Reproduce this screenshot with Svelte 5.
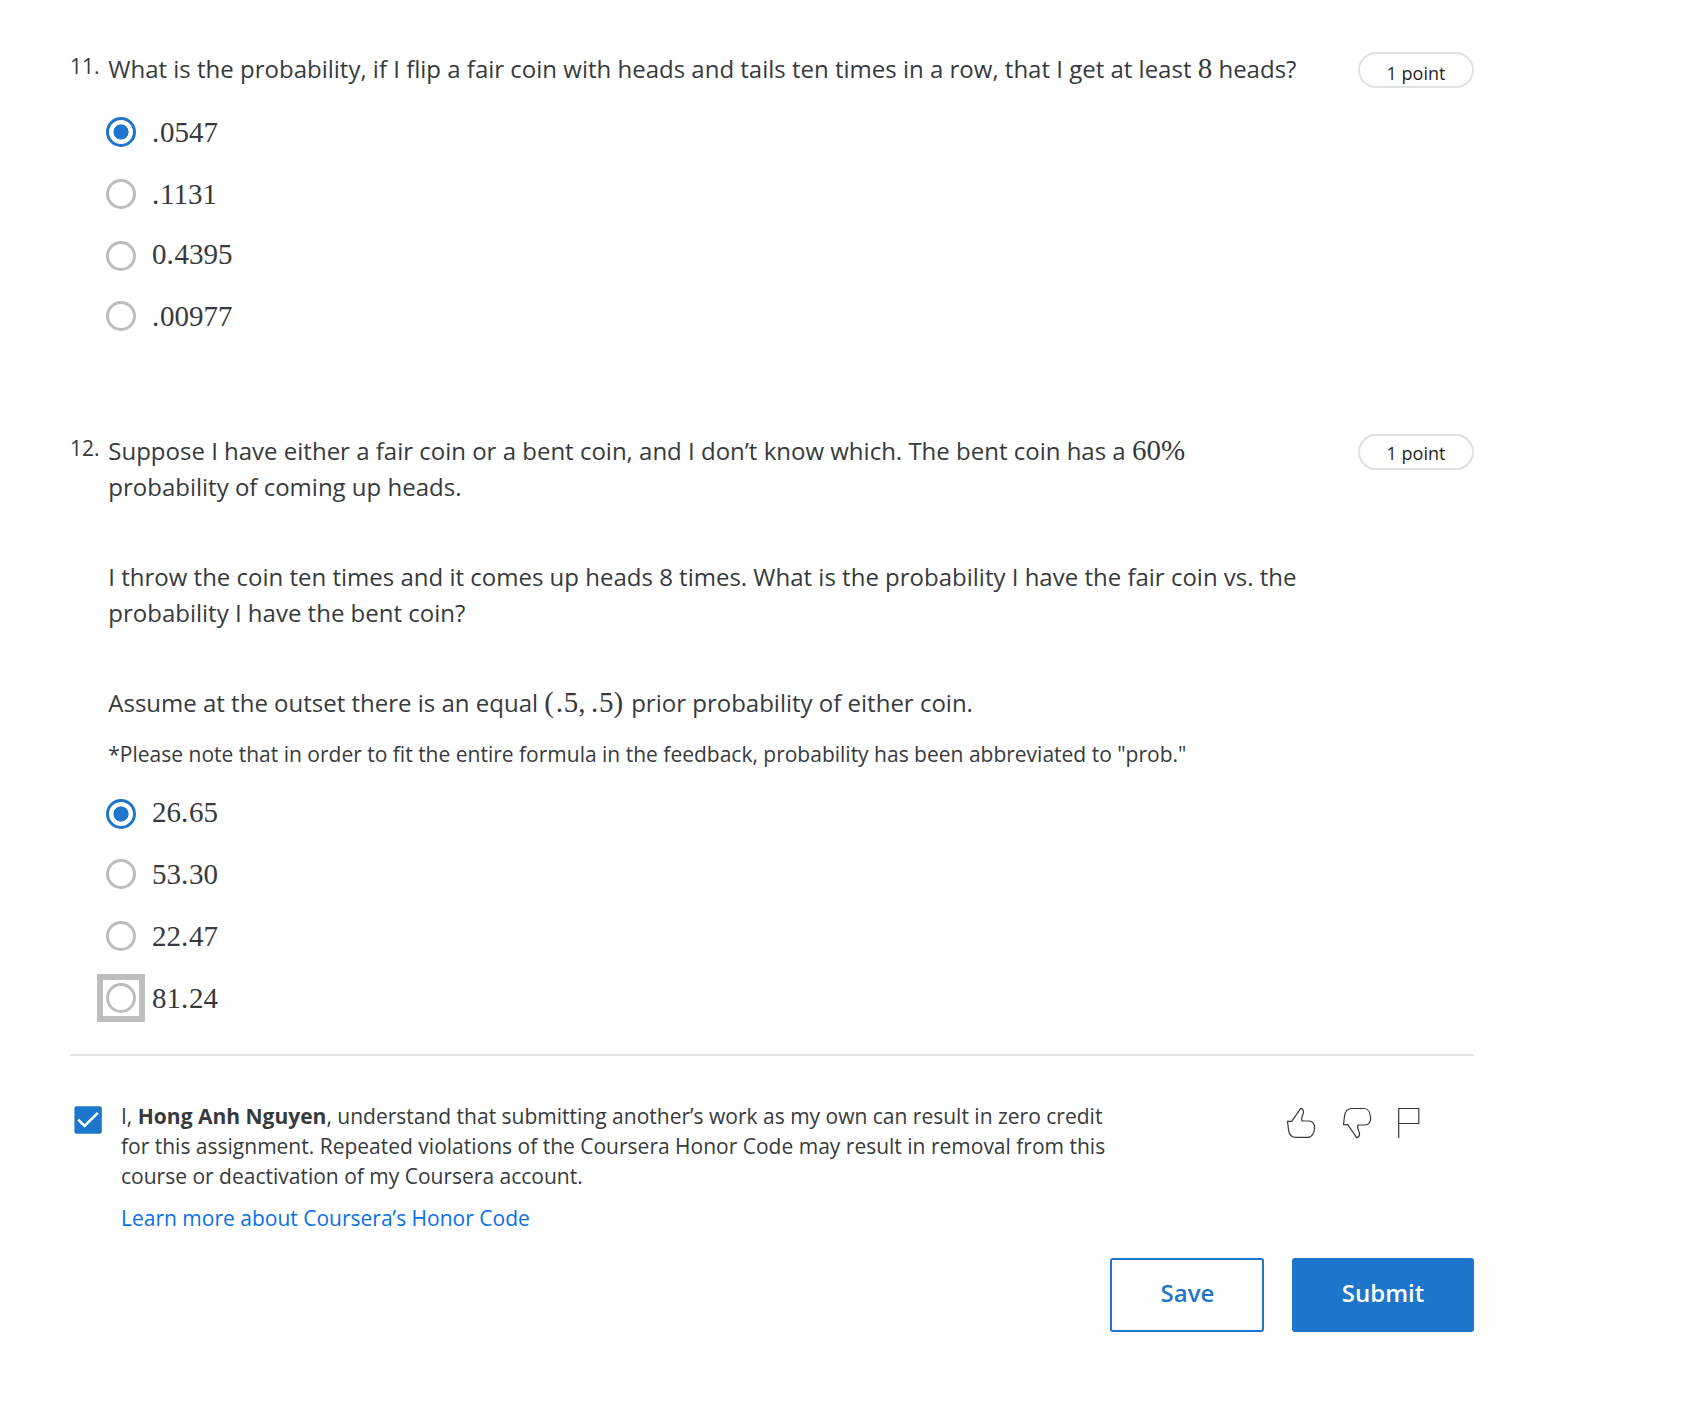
<script>
  let q1 = $state(0);
  let q2 = $state(0);
  let agreed = $state(true);

  const first = ['.0547', '.1131', '0.4395', '.00977'];
  const second = ['26.65', '53.30', '22.47', '81.24'];
</script>

{#snippet math(value)}<span class="math">{#each value.split('') as ch}{#if ch === '.'}<span class="dot">.</span>{:else}{ch}{/if}{/each}</span>{/snippet}

<main class="quiz">
  <section class="question one">
    <div class="number">11.</div>
    <div class="content">
      <p class="prompt">What is the probability, if I flip a fair coin with heads and tails ten times in a row, that I get at least {@render math('8')} heads?</p>
      <div class="options" role="radiogroup">
        {#each first as value, i}
          <label class="option">
            <input type="radio" name="q1" value={i} bind:group={q1} />
            <span class="ring"></span>
            <span class="answer">{@render math(value)}</span>
          </label>
        {/each}
      </div>
    </div>
    <div class="points">1 point</div>
  </section>

  <section class="question two">
    <div class="number">12.</div>
    <div class="content">
      <p class="prompt">Suppose I have either a fair coin or a bent coin, and I don’t know which. The bent coin has a <span class="math">60%</span><br />probability of coming up heads.</p>
      <p class="prompt">I throw the coin ten times and it comes up heads 8 times. What is the probability I have the fair coin vs. the<br />probability I have the bent coin?</p>
      <p class="prompt">Assume at the outset there is an equal <span class="math"><span class="paren">(</span><span class="dot">.</span>5<span class="comma">,</span><span class="dot">.</span>5<span class="paren">)</span></span> prior probability of either coin.</p>
      <p class="note">*Please note that in order to fit the entire formula in the feedback, probability has been abbreviated to "prob."</p>
      <div class="options" role="radiogroup">
        {#each second as value, i}
          <label class="option" class:focused={i === 3}>
            <input type="radio" name="q2" value={i} bind:group={q2} />
            <span class="ring"></span>
            <span class="answer">{@render math(value)}</span>
          </label>
        {/each}
      </div>
    </div>
    <div class="points">1 point</div>
  </section>

  <footer>
    <div class="honor">
      <label class="check">
        <input type="checkbox" bind:checked={agreed} />
        <svg width="28" height="28" viewBox="0 0 28 28">
          <rect x="0.4" y="0.3" width="27.4" height="27.4" rx="2" fill="#1d76cb" />
          {#if agreed}<path d="M4.2 13.6 L10.6 20 L23.8 6.8" fill="none" stroke="#fff" stroke-width="2.5" />{/if}
        </svg>
      </label>
      <div class="statement">
        <p>I, <b>Hong Anh Nguyen</b>, understand that submitting another’s work as my own can result in zero credit<br />for this assignment. Repeated violations of the Coursera Honor Code may result in removal from this<br />course or deactivation of my Coursera account.</p>
        <a href="#honor">Learn more about Coursera’s Honor Code</a>
      </div>
      <div class="feedback">
        <svg width="30" height="32" viewBox="0 0 30 32"><path d="M1.5 14.3 H5.7 L14.7 1.3 C18 1.5 18 6 16.6 8.5 C15.6 10.8 15 12.3 16 14 H23 C26.5 14 28.6 17 28.6 20.3 C28.6 25.5 26 30.4 22 30.4 H10 C5.5 30.4 3.2 28 2.5 22.8 Z" /></svg>
        <svg width="30" height="32" viewBox="0 0 30 32"><path d="M1.5 17.7 H5.7 L14.7 30.7 C18 30.5 18 26 16.6 23.5 C15.6 21.2 15 19.7 16 18 H23 C26.5 18 28.6 15 28.6 11.7 C28.6 5.5 26 1.5 22 1.5 H10 C5.5 1.5 3.2 4 2.5 9.2 Z" /></svg>
        <svg width="24" height="32" viewBox="0 0 24 32"><path d="M1.7 31 V1.5 H21.8 V16.5 H1.7" /></svg>
      </div>
    </div>
    <div class="actions">
      <button class="save">Save</button>
      <button class="submit">Submit</button>
    </div>
  </footer>
</main>

<style>
  :global(body) { background: #fff; }
  .quiz {
    box-sizing: border-box;
    width: 1474px;
    min-height: 1402px;
    padding: 51px 0 0 70px;
    font-family: 'Open Sans', sans-serif;
    color: #373a3c;
    white-space: nowrap;
  }
  p { margin: 0; }
  .question {
    display: grid;
    grid-template-columns: 38.3px 1249.7px 116px;
    align-items: start;
  }
  .one { height: 382px; }
  .two { height: 621px; }
  .number { font-size: 21px; line-height: 31px; }
  .prompt { font-size: 24px; line-height: 36px; }
  .prompt + .prompt { margin-top: 54px; }
  .math {
    font-family: 'Liberation Serif', serif;
    font-size: 29px;
    line-height: 1;
  }
  .dot { letter-spacing: 0.8px; }
  .paren { letter-spacing: 1.8px; }
  .comma { margin-right: 5.3px; }
  .note { margin-top: 18px; font-size: 21px; line-height: 30px; }
  .points {
    box-sizing: border-box;
    height: 36px;
    margin-top: 1px;
    padding-top: 6px;
    border: 2px solid #e1e1e1;
    border-radius: 18px;
    color: #1f1f1f;
    font-size: 18px;
    line-height: 26px;
    text-align: center;
  }
  .two .points { padding-top: 4px; }
  .options { padding-top: 30px; }
  .option {
    display: flex;
    align-items: flex-start;
    height: 30px;
    margin: 0 0 32px -2px;
  }
  .one .option:nth-child(3) { margin-bottom: 30px; }
  .two .option:first-child { margin-bottom: 30px; }
  input { appearance: none; width: 0; height: 0; margin: 0; }
  .ring {
    box-sizing: border-box;
    width: 30px;
    height: 30px;
    margin-right: 15.7px;
    border: 3px solid #bdbdbd;
    border-radius: 50%;
  }
  input:checked + .ring {
    border-color: #1d76cb;
    background: radial-gradient(circle, #1d76cb 7.2px, transparent 7.9px);
  }
  .focused .ring { position: relative; }
  .focused .ring::after {
    content: '';
    position: absolute;
    inset: -12px;
    border: 6px solid #bdbdbd;
  }
  .answer { line-height: 30px; }
  .answer .math { line-height: 30px; }
  .one .option:nth-child(3) .answer,
  .two .option:first-child .answer { margin-top: -2px; }
  footer { border-top: 2px solid #e1e1e1; }
  .honor { display: flex; padding: 45px 53px 0 4px; font-size: 21px; line-height: 30px; }
  .check { width: 47px; padding-top: 5px; }
  .check input { display: block; }
  .check svg { display: block; }
  .statement { flex: 1; }
  a { display: block; margin-top: 12px; color: #0a6fe6; text-decoration: none; }
  .feedback { display: flex; padding-top: 6px; }
  .feedback svg { fill: none; stroke: #373a3c; stroke-width: 1.2; }
  .feedback svg + svg { margin-left: 26px; }
  .feedback svg:last-child { margin-left: 25px; }
  .actions { display: flex; justify-content: flex-end; gap: 28px; margin-top: 25px; }
  button {
    box-sizing: border-box;
    height: 74px;
    padding: 0 0 5px;
    border: 2px solid #1d76cb;
    border-radius: 3px;
    font: 600 24px 'Open Sans', sans-serif;
  }
  .save { width: 154px; padding-left: 1px; background: #fff; color: #1d76cb; }
  .submit { width: 182px; background: #1d76cb; color: #fff; }
</style>
